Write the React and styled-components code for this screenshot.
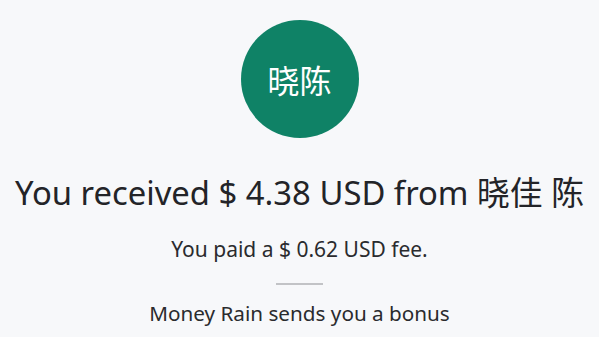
import React from "react";
import styled, { createGlobalStyle } from "styled-components";

const GlobalStyle = createGlobalStyle`
  html, body {
    margin: 0;
    padding: 0;
    background-color: #f7f8fa;
  }
  body {
    font-family: "Noto Sans", "Noto Sans CJK SC", sans-serif;
    color: #222326;
  }
`;

function App() {
  return (
    <Wrapper>
      <GlobalStyle />
      <Avatar>晓陈</Avatar>
      <Title>You received $ 4.38 USD from 晓佳 陈</Title>
      <FeeText>You paid a $ 0.62 USD fee.</FeeText>
      <LineDeco />
      <BonusText>Money Rain sends you a bonus</BonusText>
    </Wrapper>
  );
}

const Wrapper = styled.div`
  width: 599px;
  height: 337px;
  overflow: hidden;
  display: flex;
  flex-direction: column;
  align-items: center;
  padding-top: 20px;
  box-sizing: border-box;
`;

const Avatar = styled.div`
  width: 118px;
  height: 118px;
  border-radius: 50%;
  background-color: #0f8266;
  color: #ffffff;
  display: flex;
  align-items: center;
  justify-content: center;
  font-family: "Noto Sans CJK SC", sans-serif;
  font-size: 32px;
  font-weight: 400;
`;

const Title = styled.h1`
  margin: 35px 0 0;
  font-size: 32.8px;
  font-weight: 400;
  line-height: 40px;
  white-space: nowrap;
  color: #232428;
`;

const FeeText = styled.p`
  margin: 23px 0 0;
  font-size: 21px;
  line-height: 26px;
  color: #2a2b2e;
`;

const LineDeco = styled.div`
  width: 47px;
  border-top: 2px solid #c2c3c6;
  margin-top: 21px;
`;

const BonusText = styled.p`
  margin: 15px 0 0;
  font-size: 20.7px;
  line-height: 26px;
  white-space: nowrap;
  color: #2a2b2e;
`;

export default App;
